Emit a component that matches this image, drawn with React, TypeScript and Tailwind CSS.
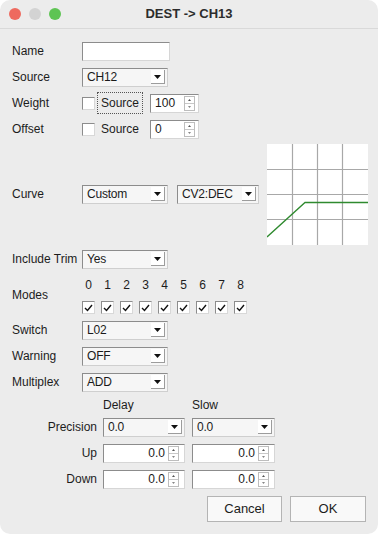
import React from "react";

function Arrow() {
  return (
    <div className="ml-auto mr-[2px] flex h-[14px] w-[14px] items-center justify-center border-r border-b border-[#9c9c9c] bg-white">
      <svg width="7" height="4" viewBox="0 0 7 4">
        <path d="M0 0 L7 0 L3.5 4 Z" fill="#111" />
      </svg>
    </div>
  );
}

function Combo({ text, className }: { text: string; className: string }) {
  return (
    <div
      className={
        "flex h-[19px] items-center border border-t-[#8c8c8c] border-l-[#8c8c8c] border-r-[#cfcfcf] border-b-[#cfcfcf] bg-[#f6f6f6] pl-[4px] text-[12px] tracking-[-0.2px] text-[#1a1a1a] " +
        className
      }
    >
      <span>{text}</span>
      <Arrow />
    </div>
  );
}

function SpinArrows({ wide }: { wide?: boolean }) {
  return (
    <div
      className={
        "flex h-[15px] w-[11px] shrink-0 flex-col border border-[#bdbdbd] bg-white " +
        (wide ? "mr-[5px]" : "mr-[3px]")
      }
    >
      <div className="flex flex-1 items-center justify-center border-b border-[#c8c8c8]">
        <svg width="3" height="2" viewBox="0 0 3 2">
          <path d="M0 2 L3 2 L1.5 0 Z" fill="#555" />
        </svg>
      </div>
      <div className="flex flex-1 items-center justify-center">
        <svg width="3" height="2" viewBox="0 0 3 2">
          <path d="M0 0 L3 0 L1.5 2 Z" fill="#888" />
        </svg>
      </div>
    </div>
  );
}

function Spin({ value, className, right }: { value: string; className: string; right?: boolean }) {
  return (
    <div
      className={
        "flex h-[19px] items-center border border-t-[#8c8c8c] border-l-[#8c8c8c] border-r-[#d6d6d6] border-b-[#d6d6d6] bg-white text-[12px] text-[#1a1a1a] " +
        className
      }
    >
      {right ? (
        <span className="flex-1 pr-[3px] text-right">{value}</span>
      ) : (
        <span className="flex-1 pl-[4px]">{value}</span>
      )}
      <SpinArrows wide={right} />
    </div>
  );
}

function Check({ checked }: { checked?: boolean }) {
  return (
    <div className="flex h-[13px] w-[13px] items-center justify-center border border-t-[#8c8c8c] border-l-[#8c8c8c] border-r-[#d8d8d8] border-b-[#d8d8d8] bg-white">
      {checked && (
        <svg width="9" height="8" viewBox="0 0 9 8">
          <path d="M1 4 L3.5 6.5 L8 1" stroke="#111" strokeWidth="1.4" fill="none" />
        </svg>
      )}
    </div>
  );
}

function Row({ label, children }: { label: string; children: React.ReactNode }) {
  return (
    <div className="flex h-[26px] items-center">
      <div className="w-[70px]">{label}</div>
      {children}
    </div>
  );
}

function Graph() {
  return (
    <svg width="101" height="101" viewBox="0 0 101 101" className="bg-white">
      {[25, 50, 75].map((v) => (
        <g key={v}>
          <line x1={v + 0.5} y1="0" x2={v + 0.5} y2="101" stroke="#a8a8a8" strokeWidth="1.2" />
          <line x1="0" y1={v + 0.5} x2="101" y2={v + 0.5} stroke="#a8a8a8" strokeWidth="1.2" />
        </g>
      ))}
      <polyline points="0,93 38,58.5 101,58.5" fill="none" stroke="#2f8a2f" strokeWidth="1.3" />
    </svg>
  );
}

export default function App() {
  const modes = [0, 1, 2, 3, 4, 5, 6, 7, 8];
  return (
    <div className="h-[534px] w-[378px] bg-white font-['Liberation_Sans',Arial,sans-serif] text-[12px] text-[#1c1c1c]">
      <div className="flex h-full w-full flex-col overflow-hidden rounded-[10px] bg-[#ececec]">
        {/* title bar */}
        <div className="grid h-[29px] grid-cols-[1fr_auto_1fr] items-center border-b border-[#d9d9d9]">
          <div className="flex gap-[8px] pl-[9px]">
            <div className="h-[12px] w-[12px] rounded-full bg-[#ee6a5f]" />
            <div className="h-[12px] w-[12px] rounded-full bg-[#d3d3d3]" />
            <div className="h-[12px] w-[12px] rounded-full bg-[#5ec453]" />
          </div>
          <div className="text-[13px] font-bold text-[#2c2c2c]">DEST -&gt; CH13</div>
          <div />
        </div>

        <div className="flex flex-col pl-[12px] pt-[9px]">
          <Row label="Name">
            <div className="h-[19px] w-[88px] border border-t-[#8c8c8c] border-l-[#8c8c8c] border-r-[#d6d6d6] border-b-[#d6d6d6] bg-white" />
          </Row>
          <Row label="Source">
            <Combo text="CH12" className="w-[86px]" />
          </Row>
          <Row label="Weight">
            <Check />
            <div className="ml-[2px] border border-dotted border-[#555] px-[3px] py-[1px]">Source</div>
            <Spin value="100" className="ml-[7px] w-[49px]" />
          </Row>
          <Row label="Offset">
            <Check />
            <div className="ml-[2px] border border-transparent px-[3px] py-[1px]">Source</div>
            <Spin value="0" className="ml-[7px] w-[49px]" />
          </Row>

          <div className="flex h-[104px] items-center">
            <div className="w-[70px]">Curve</div>
            <Combo text="Custom" className="w-[86px]" />
            <Combo text="CV2:DEC" className="ml-[9px] w-[82px]" />
            <div className="ml-[8px]">
              <Graph />
            </div>
          </div>

          <Row label="Include Trim">
            <Combo text="Yes" className="w-[86px]" />
          </Row>

          <div className="flex h-[45px] items-center">
            <div className="w-[70px]">Modes</div>
            <div className="flex h-full flex-col">
              <div className="flex h-[25px] items-center gap-[6px]">
                {modes.map((m) => (
                  <div key={m} className="w-[13px] text-center">
                    {m}
                  </div>
                ))}
              </div>
              <div className="flex gap-[6px] pt-[4px]">
                {modes.map((m) => (
                  <Check key={m} checked />
                ))}
              </div>
            </div>
          </div>

          <Row label="Switch">
            <Combo text="L02" className="w-[86px]" />
          </Row>
          <Row label="Warning">
            <Combo text="OFF" className="w-[86px]" />
          </Row>
          <Row label="Multiplex">
            <Combo text="ADD" className="w-[86px]" />
          </Row>

          <div className="flex h-[19px] items-center pl-[91px]">
            <div className="w-[89px]">Delay</div>
            <div>Slow</div>
          </div>
          <div className="flex h-[26px] items-center">
            <div className="w-[85px] text-right">Precision</div>
            <Combo text="0.0" className="ml-[6px] w-[82px]" />
            <Combo text="0.0" className="ml-[7px] w-[83px]" />
          </div>
          <div className="flex h-[26px] items-center">
            <div className="w-[85px] text-right">Up</div>
            <Spin value="0.0" right className="ml-[6px] w-[82px]" />
            <Spin value="0.0" right className="ml-[7px] w-[83px]" />
          </div>
          <div className="flex h-[26px] items-center">
            <div className="w-[85px] text-right">Down</div>
            <Spin value="0.0" right className="ml-[6px] w-[82px]" />
            <Spin value="0.0" right className="ml-[7px] w-[83px]" />
          </div>

          <div className="mt-[4px] flex justify-end gap-[8px] pr-[12px]">
            <button className="h-[26px] w-[75px] border border-[#b4b4b4] bg-[#f9f9f9] text-[13px] text-[#1c1c1c]">
              Cancel
            </button>
            <button className="h-[26px] w-[76px] border border-[#b4b4b4] bg-[#f9f9f9] text-[13px] text-[#1c1c1c]">
              OK
            </button>
          </div>
        </div>
      </div>
    </div>
  );
}
